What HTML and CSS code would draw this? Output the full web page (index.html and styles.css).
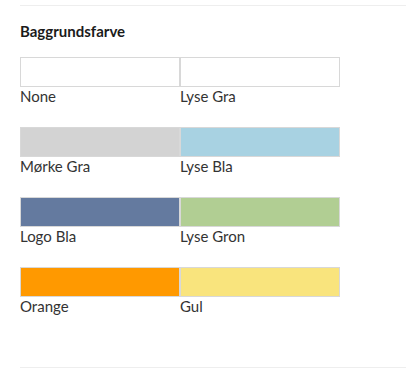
FILE: index.html
```html
<!DOCTYPE html>
<html lang="da">
<head>
    <meta charset="UTF-8">
    <meta name="viewport" content="width=device-width, initial-scale=1.0">
    <title>Baggrundsfarve</title>
    <link rel="stylesheet" href="styles.css">
</head>
<body>
    <div class="panel">
        <div class="rule"></div>
        <h3>Baggrundsfarve</h3>

        <div class="swatches">
            <div class="option">
                <div class="swatch none"></div>
                <div class="label">None</div>
            </div>
            <div class="option">
                <div class="swatch light-grey"></div>
                <div class="label">Lyse Gra</div>
            </div>
            <div class="option">
                <div class="swatch dark-grey"></div>
                <div class="label">Mørke Gra</div>
            </div>
            <div class="option">
                <div class="swatch light-blue"></div>
                <div class="label">Lyse Bla</div>
            </div>
            <div class="option">
                <div class="swatch logo-blue"></div>
                <div class="label">Logo Bla</div>
            </div>
            <div class="option">
                <div class="swatch light-green"></div>
                <div class="label">Lyse Gron</div>
            </div>
            <div class="option">
                <div class="swatch orange"></div>
                <div class="label">Orange</div>
            </div>
            <div class="option">
                <div class="swatch yellow"></div>
                <div class="label">Gul</div>
            </div>
        </div>

        <div class="rule"></div>
    </div>
</body>
</html>
```

FILE: styles.css
```css
* {
    margin: 0;
    padding: 0;
    box-sizing: border-box;
    font-family: Lato, "Liberation Sans", sans-serif;
}

body {
    background: #fff;
    color: #333;
}

.panel {
    padding: 5px 0 0 20px;
}

.rule {
    height: 1px;
    background-color: #eeeeee;
}

h3 {
    font-size: 15px;
    font-weight: bold;
    line-height: 20px;
    color: #1b1b1b;
    margin: 15px 0 16px;
}

.swatches {
    display: grid;
    grid-template-columns: 160px 160px;
    row-gap: 22px;
    margin-bottom: 52px;
}

.swatch {
    height: 30px;
    border: 1px solid #d8d8d8;
}

.label {
    font-size: 15px;
    line-height: 18px;
    color: #333;
}

.none { background-color: #fff; }
.light-grey { background-color: #fff; }
.dark-grey { background-color: #d3d3d3; }
.light-blue { background-color: #a8d2e2; }
.logo-blue { background-color: #647a9f; }
.light-green { background-color: #b1ce93; }
.orange { background-color: #ff9900; }
.yellow { background-color: #f9e47d; }
```
